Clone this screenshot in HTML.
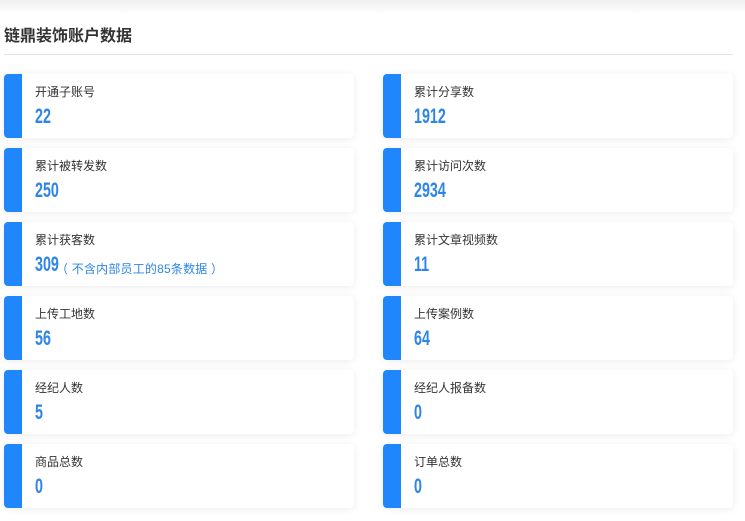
<!DOCTYPE html>
<html><head><meta charset="utf-8"><style>
*{margin:0;padding:0;box-sizing:border-box}
body{width:745px;height:521px;overflow:hidden;background:#fff;font-family:"Liberation Sans","Noto Sans CJK SC",sans-serif;position:relative}
.top{position:absolute;left:0;top:0;width:745px;height:14px;background:linear-gradient(#f0f0f0,#fff)}
h1{position:absolute;left:4px;top:22px;font-size:16px;font-weight:bold;color:#333}
.hr{position:absolute;left:4px;top:54px;width:729px;height:1px;background:#e4e4e4}
.c{position:absolute;width:350px;height:64px;background:#fff;border-radius:4px;box-shadow:0 1px 8px rgba(0,0,0,0.08);overflow:hidden}
.c:before{content:"";position:absolute;left:0;top:0;bottom:0;width:18px;background:#1f86fc}
.l{position:absolute;left:31px;top:9px;font-size:12px;color:#333}
.n{position:absolute;left:31px;top:31px;font-weight:bold;font-size:21px;color:#2d85e6;transform:scaleX(0.68);transform-origin:left center}
.s{position:absolute;left:52px;top:38px;font-size:12px;color:#2d85e6;letter-spacing:0.2px}
</style></head><body>
<div class="top"></div>
<h1>链鼎装饰账户数据</h1>
<div class="hr"></div>
<div class="c" style="left:4px;top:74px"><div class="l">开通子账号</div><div class="n">22</div></div>
<div class="c" style="left:383px;top:74px"><div class="l">累计分享数</div><div class="n">1912</div></div>
<div class="c" style="left:4px;top:148px"><div class="l">累计被转发数</div><div class="n">250</div></div>
<div class="c" style="left:383px;top:148px"><div class="l">累计访问次数</div><div class="n">2934</div></div>
<div class="c" style="left:4px;top:222px"><div class="l">累计获客数</div><div class="n">309</div><div class="s">（ 不含内部员工的85条数据 ）</div></div>
<div class="c" style="left:383px;top:222px"><div class="l">累计文章视频数</div><div class="n">11</div></div>
<div class="c" style="left:4px;top:296px"><div class="l">上传工地数</div><div class="n">56</div></div>
<div class="c" style="left:383px;top:296px"><div class="l">上传案例数</div><div class="n">64</div></div>
<div class="c" style="left:4px;top:370px"><div class="l">经纪人数</div><div class="n">5</div></div>
<div class="c" style="left:383px;top:370px"><div class="l">经纪人报备数</div><div class="n">0</div></div>
<div class="c" style="left:4px;top:444px"><div class="l">商品总数</div><div class="n">0</div></div>
<div class="c" style="left:383px;top:444px"><div class="l">订单总数</div><div class="n">0</div></div>
</body></html>
